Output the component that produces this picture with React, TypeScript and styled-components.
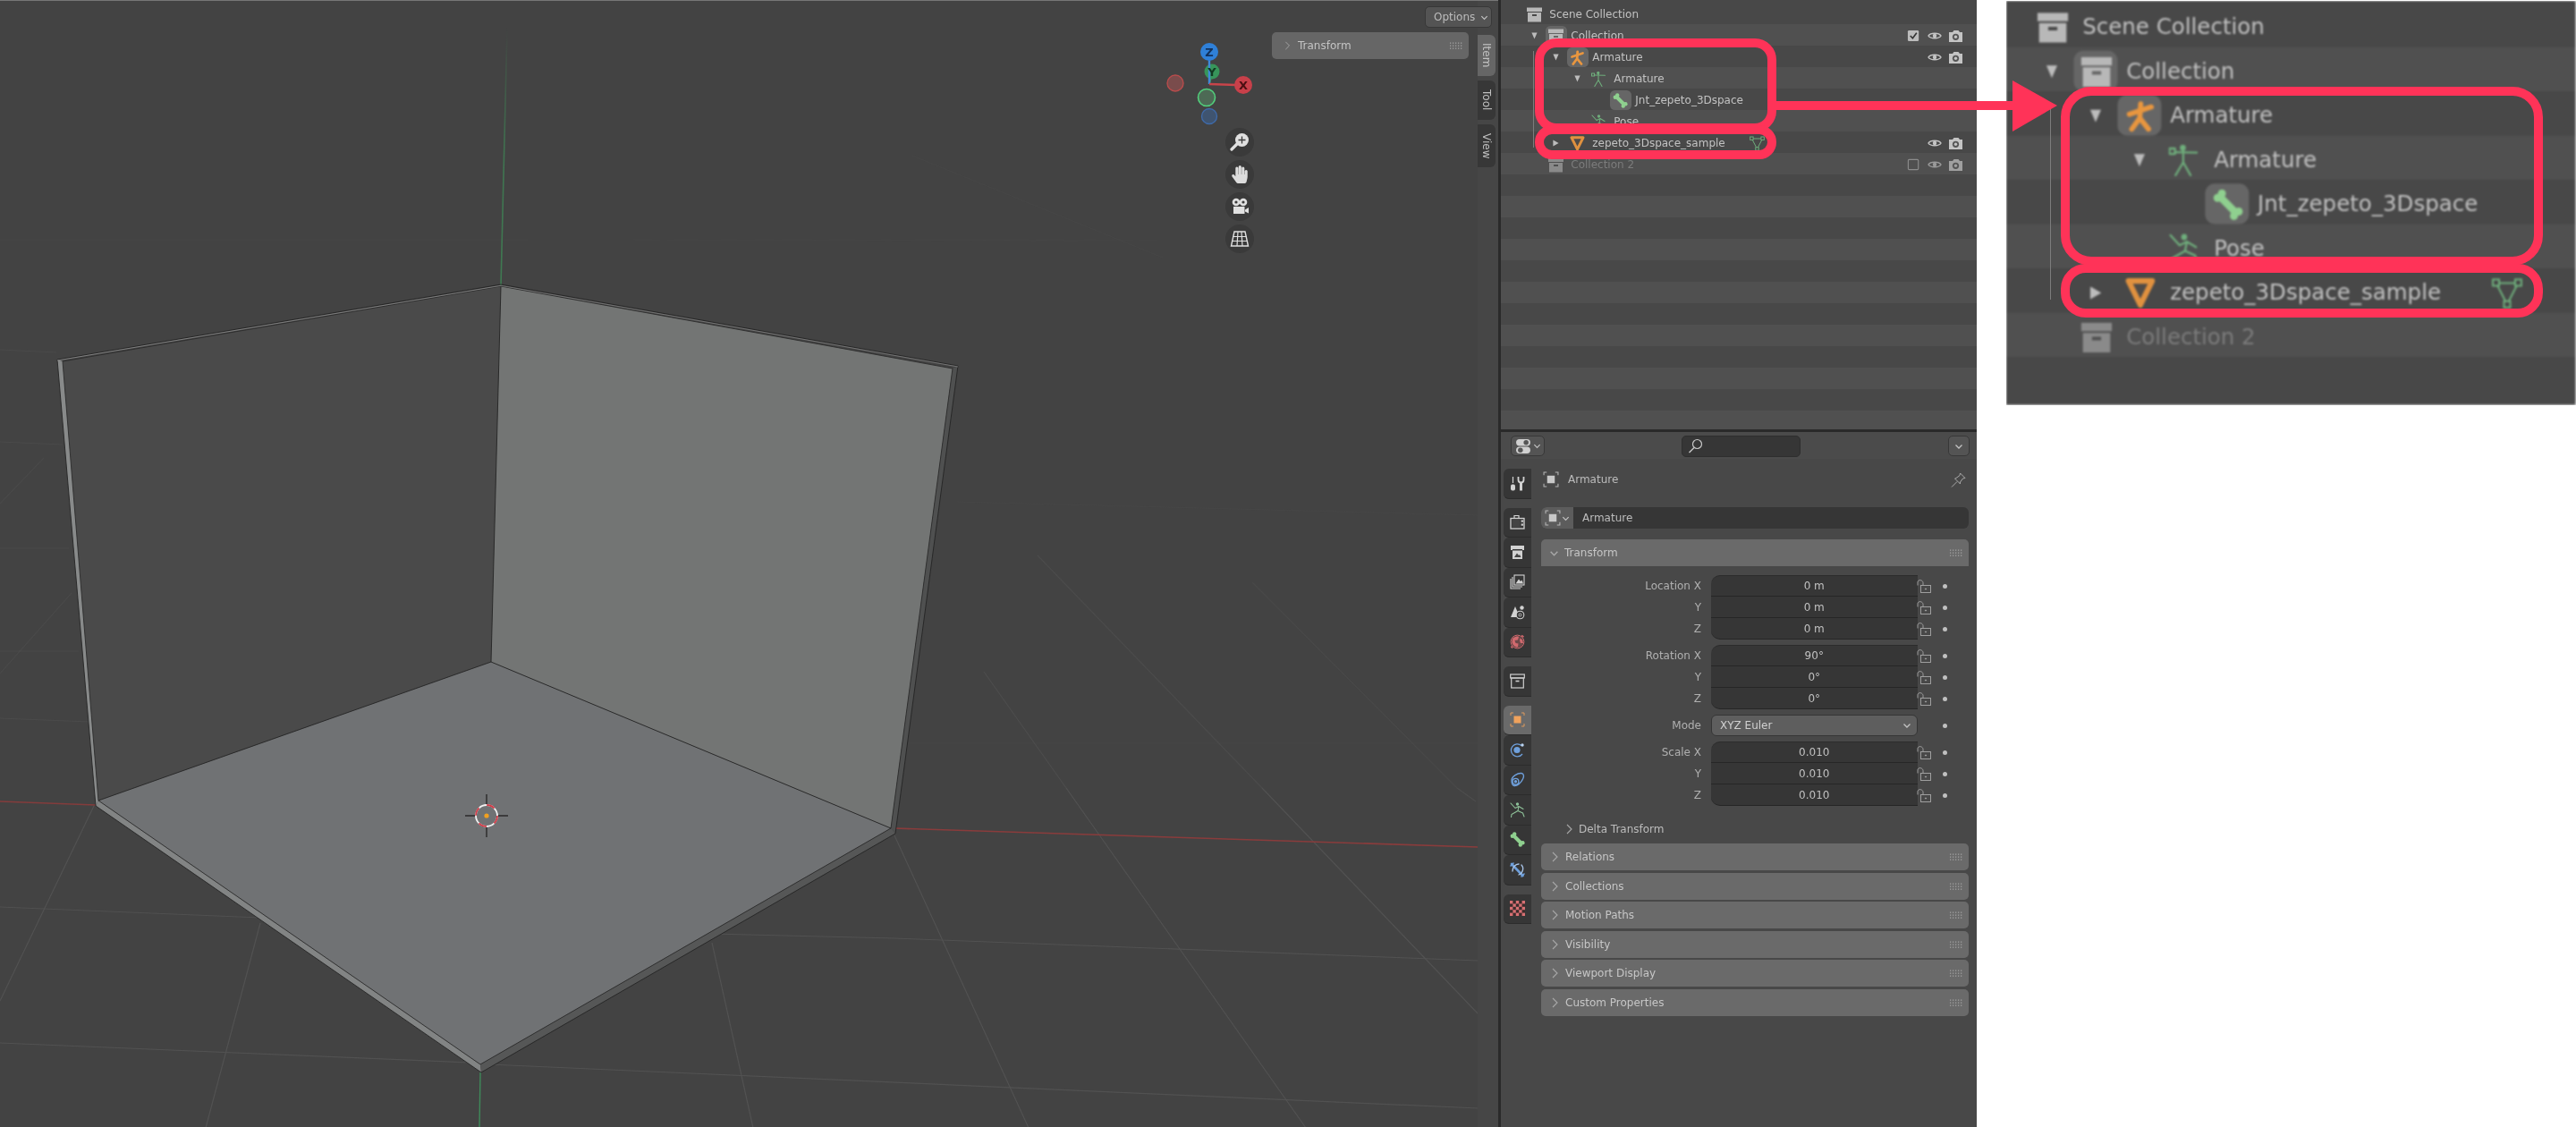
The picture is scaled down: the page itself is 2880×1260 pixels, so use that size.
import React from 'react';
import styled, { createGlobalStyle } from 'styled-components';
import { FaHandPaper } from 'react-icons/fa';

const Global = createGlobalStyle`
  html, body { margin: 0; padding: 0; background: #fff; overflow: hidden; }
  body { font-family: "DejaVu Sans", "Liberation Sans", sans-serif; font-size: 12px; color: #c6c6c6; }
`;

const Page = styled.div`
  position: relative;
  display: flex;
  width: 2880px;
  height: 1260px;
  background: #fff;
  overflow: hidden;
`;

/* ---------- 3D viewport ---------- */
const Viewport = styled.section`
  position: relative;
  display: flex;
  width: 1675px;
  height: 1260px;
  background: #434343;
  border-top: 1px solid #777;
  box-sizing: border-box;
`;
const SceneSvg = styled.svg`
  flex: 0 0 1652px;
  width: 1652px;
  height: 1259px;
  display: block;
`;
const GridGroup = styled.g`
  filter: blur(0.6px);
`;
const TabStrip = styled.div`
  flex: 1;
  background: #464646;
  display: flex;
  flex-direction: column;
  align-items: flex-start;
  gap: 5px;
  padding-top: 38px;
`;
const SideTab = styled.div<{ $active?: boolean; $h: number }>`
  box-sizing: border-box;
  width: 20px;
  height: ${p => p.$h}px;
  writing-mode: vertical-rl;
  display: flex;
  align-items: center;
  justify-content: center;
  font-size: 12px;
  color: #c0c0c0;
  background: ${p => (p.$active ? '#666' : '#373737')};
  border-radius: 0 6px 6px 0;
  filter: blur(0.45px);
`;
const OptionsButton = styled.div`
  position: absolute;
  left: 1593px;
  top: 6px;
  box-sizing: border-box;
  width: 75px;
  height: 24px;
  padding-left: 9px;
  display: flex;
  align-items: center;
  gap: 6px;
  border-radius: 5px;
  background: #545454;
  border: 1px solid #383838;
  color: #bcbcbc;
  filter: blur(0.45px);
`;
const FloatingPanel = styled.div`
  position: absolute;
  left: 1422px;
  top: 35px;
  box-sizing: border-box;
  width: 220px;
  height: 30px;
  padding: 0 7px 0 12px;
  display: flex;
  align-items: center;
  border-radius: 5px;
  background: #666;
  color: #c4c4c4;
  filter: blur(0.45px);
`;
const Gizmo = styled.svg`
  position: absolute;
  left: 1300px;
  top: 34px;
  width: 110px;
  height: 110px;
  filter: blur(0.45px);
`;
const NavColumn = styled.div`
  position: absolute;
  left: 1370px;
  top: 142px;
  display: flex;
  flex-direction: column;
  gap: 4px;
  filter: blur(0.45px);
`;
const NavButton = styled.div`
  width: 32px;
  height: 32px;
  border-radius: 50%;
  background: #3a3a3a;
  display: flex;
  align-items: center;
  justify-content: center;
  color: #dcdcdc;
`;

const Divider = styled.div`
  width: 3px;
  height: 1260px;
  background: #2a2a2a;
`;

/* ---------- right column ---------- */
const Column = styled.div`
  width: 532px;
  height: 1260px;
  display: flex;
  flex-direction: column;
  gap: 3px;
  background: #2a2a2a;
`;
const Tree = styled.div`
  --u: 24px;
  --base: 25.5px;
  --icon: 17px;
  --shift: 2px;
  position: relative;
  box-sizing: border-box;
  overflow: hidden;
  background: #484848;
  padding-top: 3px;
  font-size: 12px;
  filter: blur(0.45px);
`;
const Outliner = styled(Tree)`
  height: 480px;
  flex: none;
`;
const Row = styled.div<{ $odd: boolean; $d: number; $twisty: boolean }>`
  display: flex;
  align-items: center;
  height: var(--u);
  box-sizing: border-box;
  padding-top: var(--shift);
  padding-left: calc(var(--base) + var(--u) * ${p => (p.$twisty ? p.$d - 1 : p.$d)});
  background: ${p => (p.$odd ? '#505050' : '#484848')};
`;
const Twisty = styled.span<{ $open: boolean }>`
  flex: 0 0 var(--u);
  display: flex;
  align-items: center;
  justify-content: center;
  &::before {
    content: '';
    display: block;
    width: calc(var(--u) * 0.26);
    height: calc(var(--u) * 0.3);
    background: #bcbcbc;
    clip-path: ${p =>
      p.$open ? 'polygon(0 0, 100% 0, 50% 100%)' : 'polygon(0 0, 100% 50%, 0 100%)'};
  }
`;
const IconSlot = styled.span<{ $active?: boolean }>`
  flex: 0 0 var(--u);
  height: calc(var(--u) * 0.9);
  display: flex;
  align-items: center;
  justify-content: center;
  border-radius: calc(var(--u) * 0.22);
  background: ${p => (p.$active ? '#666666' : 'transparent')};
`;
const RowLabel = styled.span<{ $dim?: boolean }>`
  margin-left: calc(var(--u) * 0.2);
  white-space: nowrap;
  color: ${p => (p.$dim ? '#7c7c7c' : '#c2c2c2')};
`;
const RowBadge = styled.span`
  margin-left: calc(var(--u) * 1.14);
  display: flex;
`;
const Toggles = styled.div`
  margin-left: auto;
  padding-right: 15px;
  display: grid;
  grid-template-columns: 14px 14px 17px;
  column-gap: 9px;
  align-items: center;
`;
const TreeLine = styled.div<{ $x: number; $y: number; $h: number }>`
  position: absolute;
  left: ${p => p.$x}px;
  top: ${p => p.$y}px;
  height: ${p => p.$h}px;
  width: 1px;
  background: #7c7c7c;
`;
const Highlight = styled.div<{ $x: number; $y: number; $w: number; $h: number; $r: number }>`
  position: absolute;
  left: ${p => p.$x}px;
  top: ${p => p.$y}px;
  width: ${p => p.$w}px;
  height: ${p => p.$h}px;
  box-sizing: border-box;
  border: 10px solid #ff3358;
  border-radius: ${p => p.$r}px;
  z-index: 2;
`;

/* properties */
const Properties = styled.div`
  flex: 1;
  min-height: 0;
  background: #484848;
  display: flex;
  flex-direction: column;
  filter: blur(0.45px);
`;
const PropHeader = styled.header`
  flex: none;
  box-sizing: border-box;
  height: 30px;
  padding: 4px 8.5px 3px 11px;
  display: flex;
  justify-content: space-between;
  align-items: center;
  background: #4b4b4b;
`;
const HeaderButton = styled.div<{ $w: number }>`
  box-sizing: border-box;
  width: ${p => p.$w}px;
  height: 23px;
  display: flex;
  align-items: center;
  justify-content: center;
  gap: 2px;
  border-radius: 5px;
  background: #545454;
  border: 1px solid #383838;
  color: #d0d0d0;
`;
const SearchBox = styled.div`
  box-sizing: border-box;
  width: 133px;
  height: 24px;
  padding-left: 6px;
  margin-right: 12px;
  display: flex;
  align-items: center;
  border-radius: 5px;
  background: #363636;
  border: 1px solid #2e2e2e;
`;
const PropBody = styled.div`
  flex: 1;
  display: flex;
  min-height: 0;
`;
const TabColumn = styled.nav`
  flex: 0 0 45px;
  box-sizing: border-box;
  padding: 11px 0 0 3px;
  display: flex;
  flex-direction: column;
  gap: 10px;
`;
const TabGroup = styled.div`
  display: flex;
  flex-direction: column;
`;
const PropTab = styled.div<{ $active?: boolean }>`
  box-sizing: border-box;
  width: 31px;
  height: 33.5px;
  display: flex;
  align-items: center;
  justify-content: center;
  background: ${p => (p.$active ? '#6a6a6a' : '#363636')};
  border-radius: 6px 0 0 6px;
  border-bottom: 1px solid #2c2c2c;
`;
const PropContent = styled.div`
  flex: 1;
  box-sizing: border-box;
  padding: 10px 9px 0 0;
  display: flex;
  flex-direction: column;
`;
const TitleRow = styled.div`
  height: 26px;
  display: flex;
  align-items: center;
  gap: 10px;
  padding: 0 3px 0 2px;
  margin-bottom: 18px;
`;
const TitleText = styled.span`
  flex: 1;
  color: #bcbcbc;
`;
const NameField = styled.div`
  height: 24px;
  display: flex;
  align-items: center;
  border-radius: 6px;
  background: #363636;
  overflow: hidden;
  margin-bottom: 12px;
  color: #bcbcbc;
`;
const NameButton = styled.div`
  width: 36px;
  height: 100%;
  margin-right: 10px;
  background: #5c5c5c;
  display: flex;
  align-items: center;
  justify-content: center;
  gap: 1px;
  color: #d0d0d0;
`;
const PanelHeader = styled.div<{ $open?: boolean }>`
  flex: none;
  box-sizing: border-box;
  height: 30px;
  padding: 0 7px 0 9px;
  display: flex;
  align-items: center;
  gap: 6px;
  background: #6a6a6a;
  border-radius: ${p => (p.$open ? '5px 5px 0 0' : '5px')};
  color: #c6c6c6;
  margin-bottom: ${p => (p.$open ? '10px' : '2.5px')};
`;
const PanelTitle = styled.span`
  flex: 1;
`;
const FloatingTitle = styled(PanelTitle)`
  margin-left: 7px;
`;
const FieldGroup = styled.div`
  display: flex;
  flex-direction: column;
  margin-bottom: 6px;
`;
const FieldRow = styled.div`
  display: grid;
  grid-template-columns: 179px 230.5px 26px 21px;
  column-gap: 0;
  height: 24px;
  align-items: center;
`;
const FieldLabel = styled.span`
  justify-self: end;
  color: #b0b0b0;
`;
const NumberField = styled.div<{ $first?: boolean; $last?: boolean }>`
  grid-column: 2;
  margin-left: 11px;
  width: 230.5px;
  height: 24px;
  box-sizing: border-box;
  display: flex;
  align-items: center;
  justify-content: center;
  background: #363636;
  color: #c0c0c0;
  border-bottom: 1px solid #262626;
  border-top: ${p => (p.$first ? '1px solid #2c2c2c' : 'none')};
  border-radius: ${p => (p.$first ? '10px' : '0')} 0 0 ${p => (p.$last ? '10px' : '0')};
`;
const SelectField = styled(NumberField)`
  justify-content: space-between;
  padding: 0 6px 0 9px;
  background: #5e5e5e;
  color: #d0d0d0;
  border: 1px solid #353535;
  border-radius: 6px;
`;
const LockSlot = styled.span`
  margin-left: 11px;
  display: flex;
  justify-content: center;
`;
const DotSlot = styled.span`
  margin-left: 11px;
  display: flex;
  justify-content: center;
  &::before {
    content: '';
    width: 5px;
    height: 5px;
    border-radius: 50%;
    background: #c0c0c0;
  }
`;
const SubPanel = styled.div`
  height: 24px;
  margin: 8px 0 4px;
  padding-left: 25px;
  display: flex;
  align-items: center;
  gap: 5px;
  color: #bcbcbc;
`;

/* inset: the same outliner, magnified like the enlarged crop it shows */
const InsetColumn = styled.aside`
  flex: 1;
  padding-left: 33px;
  padding-top: 1px;
`;
const InsetFrame = styled.div`
  position: relative;
  width: 637px;
  height: 452px;
  overflow: hidden;
`;
const InsetTree = styled(Tree)`
  --base: 13px;
  --shift: 3px;
  width: 312.25px;
  height: 219.2px;
  padding-top: 0.75px;
  transform: scale(2.04, 2.0625);
  transform-origin: 0 0;
`;
const ArrowSvg = styled.svg`
  position: absolute;
  left: 1980px;
  top: 80px;
  width: 330px;
  height: 80px;
  z-index: 3;
`;

/* ---------- icons ---------- */
const Svg = styled.svg<{ $size?: number }>`
  width: ${p => (p.$size ? `${p.$size}px` : 'var(--icon)')};
  height: ${p => (p.$size ? `${p.$size}px` : 'var(--icon)')};
  display: block;
  flex: none;
`;

type IconProps = { size?: number; color?: string };
const mk =
  (body: (c: string) => React.ReactNode, def: string) =>
  ({ size, color }: IconProps) =>
    (
      <Svg $size={size} viewBox="0 0 17 17" fill="none">
        {body(color ?? def)}
      </Svg>
    );

const BoxIcon = mk(
  c => (
    <>
      <rect x="0" y="0.5" width="17" height="4.5" fill={c} />
      <path d="M1 6h15v10.5H1z M6 8v2h5V8z" fill={c} fillRule="evenodd" />
    </>
  ),
  '#b8b8b8'
);
const FigureIcon = mk(
  c => (
    <g stroke={c} strokeWidth="2.8" strokeLinecap="round" strokeLinejoin="round">
      <path d="M2.5 7.5L14.5 3.5" />
      <path d="M8.7 1.8L8.2 9.5L3.8 15.5M8.2 9.5L13 15.5" />
    </g>
  ),
  '#e8963f'
);
const ArmatureIcon = mk(
  c => (
    <g stroke={c} strokeWidth="1.1" strokeLinecap="round" strokeLinejoin="round">
      <rect x="0.5" y="2" width="3" height="3" />
      <circle cx="7.8" cy="1.6" r="1.1" fill={c} />
      <path d="M3.5 4L15.5 4.2M8 3L8 9.5L3.8 16.5M8 9.5L12 16.5" />
    </g>
  ),
  '#6fae7c'
);
const BoneIcon = mk(
  c => (
    <g fill={c}>
      <path d="M4 4L13 13" stroke={c} strokeWidth="4" />
      <circle cx="2.8" cy="4.8" r="2.2" />
      <circle cx="5.2" cy="2.4" r="2.2" />
      <circle cx="11.8" cy="14.6" r="2.2" />
      <circle cx="14.4" cy="12.2" r="2.2" />
    </g>
  ),
  '#8fd08f'
);
const PoseIcon = mk(
  c => (
    <g stroke={c} strokeWidth="1.1" strokeLinecap="round" strokeLinejoin="round">
      <circle cx="8.5" cy="2" r="1.1" fill={c} />
      <path d="M1 1L6 6.5L10 4.5L15 7.5M10 4.5L9 9.5L2 13.5L1.5 16.5M9 9.5L14.5 12L16 16" />
    </g>
  ),
  '#6fae7c'
);
const MeshObjIcon = mk(
  c => <path d="M2 1.8H15L8.5 14.8Z" fill={c} fillOpacity="0.05" stroke={c} strokeWidth="3" strokeLinejoin="round" />,
  '#e0913f'
);
const MeshDataIcon = mk(
  c => (
    <g stroke={c} strokeWidth="1">
      <path d="M2.5 3L8.5 14.5L14.5 3Z" />
      <rect x="0.7" y="1" width="3.4" height="3.4" fill="#454545" />
      <rect x="12.9" y="1" width="3.4" height="3.4" fill="#454545" />
      <rect x="6.8" y="12.8" width="3.4" height="3.4" fill="#454545" />
    </g>
  ),
  '#6fae7c'
);
const EyeIcon = mk(
  c => (
    <g>
      <path d="M1 8.5C3.5 4.5 13.5 4.5 16 8.5C13.5 12.5 3.5 12.5 1 8.5Z" stroke={c} strokeWidth="1.5" />
      <circle cx="8.5" cy="8.5" r="2.4" fill={c} />
    </g>
  ),
  '#c4c4c4'
);
const CameraIcon = mk(
  c => (
    <g>
      <path d="M1 4H5L6.5 2H11.5L13 4H16V15H1Z" fill={c} />
      <circle cx="8.5" cy="9.3" r="3.6" fill="#555" />
      <circle cx="8.5" cy="9.3" r="1.7" fill={c} />
    </g>
  ),
  '#c4c4c4'
);
const CheckIcon = mk(
  () => (
    <g>
      <rect x="1" y="2" width="13" height="13" rx="1.5" fill="#bcbcbc" />
      <path d="M4 8.5L6.8 11.5L11.5 5" stroke="#333" strokeWidth="1.7" />
    </g>
  ),
  '#bcbcbc'
);
const UncheckIcon = mk(
  c => <rect x="1.5" y="2.5" width="12" height="12" rx="1.2" stroke={c} strokeWidth="1.2" />,
  '#8c8c8c'
);
const LockIcon = mk(
  c => (
    <g stroke={c} strokeWidth="0.9">
      <path d="M1 7.5V4C1 0.8 6.5 0.8 7 4.5L7 7" />
      <rect x="4.5" y="7.5" width="11" height="8" />
      <circle cx="10" cy="11.5" r="0.6" fill={c} />
    </g>
  ),
  '#a8a8a8'
);
const ObjectIcon = mk(
  c => (
    <g>
      <rect x="4.5" y="4.5" width="8" height="8" fill={c} />
      <path d="M1 4V1H4M13 1H16V4M16 13V16H13M4 16H1V13" stroke={c} strokeWidth="1" opacity="0.85" />
    </g>
  ),
  '#c8c8c8'
);
const ToolIcon = mk(
  c => (
    <g>
      <path d="M3.5 1V8" stroke={c} strokeWidth="1.2" />
      <rect x="1" y="9.5" width="5" height="7" rx="2" fill={c} />
      <path d="M9.5 1V4.5Q9.5 7.5 12.5 7.5Q15.5 7.5 15.5 4.5V1" stroke={c} strokeWidth="1.8" />
      <path d="M12.5 7V16.5" stroke={c} strokeWidth="3" />
    </g>
  ),
  '#d2d2d2'
);
const RenderIcon = mk(
  c => (
    <g>
      <path d="M5 4V1.5H10V4" stroke={c} strokeWidth="1.2" />
      <rect x="1" y="4.5" width="15" height="11.5" stroke={c} strokeWidth="1.3" />
      <rect x="2.5" y="6" width="9" height="8.5" fill="#444" />
      <rect x="12.7" y="6.5" width="2.2" height="2.2" fill={c} />
      <rect x="12.7" y="10.5" width="2.2" height="2.2" fill={c} />
    </g>
  ),
  '#d2d2d2'
);
const OutputIcon = mk(
  c => (
    <g fill={c}>
      <path d="M1 1H16V6H14V5H3V6H1Z" />
      <path d="M3 6.5H14V16H3Z" />
      <path d="M5 14L8 9.5L10 12L11 11L12.5 14Z" fill="#444" />
    </g>
  ),
  '#d2d2d2'
);
const LayerIcon = mk(
  c => (
    <g stroke={c} strokeWidth="1.1">
      <rect x="5" y="1" width="11" height="11" />
      <path d="M3 3V14H14" />
      <path d="M1 5V16H12" />
      <path d="M6.5 10.5L10 5.5L12 8L13.5 6.5L15 10.5Z" fill={c} stroke="none" />
    </g>
  ),
  '#d2d2d2'
);
const SceneIcon = mk(
  c => (
    <g>
      <path d="M6 2L11 14H1Z" fill={c} />
      <circle cx="13.5" cy="3.5" r="2.2" fill={c} />
      <circle cx="11.5" cy="11.5" r="4.3" fill="#363636" stroke={c} strokeWidth="1.1" />
      <circle cx="11.5" cy="11.5" r="1.5" stroke={c} strokeWidth="0.8" />
    </g>
  ),
  '#d2d2d2'
);
const WorldIcon = mk(
  c => (
    <g>
      <circle cx="8.5" cy="8.5" r="6.8" fill={c} opacity="0.35" />
      <path d="M3 5C5 3 8 2 10 3L9 6.5L5.5 7L6.5 10L9.5 10.5L9 14.5C6 15 3 12 2.5 9Z" fill={c} />
      <path d="M11.5 4.5L14 6.5L15 10L12 10L11 7Z" fill={c} />
      <path d="M1.5 13.5L3 15.5M13 1.5L15.5 3" stroke={c} strokeWidth="1.6" />
      <circle cx="8.5" cy="8.5" r="7.4" stroke={c} strokeWidth="1" />
    </g>
  ),
  '#d0696e'
);
const BoxOutlineIcon = mk(
  c => (
    <g stroke={c} strokeWidth="1.2">
      <rect x="0.7" y="1" width="15.6" height="4" />
      <rect x="1.7" y="5" width="13.6" height="11" />
      <path d="M6.5 8.5H10.5" strokeWidth="1.6" />
    </g>
  ),
  '#cfcfcf'
);
const PhysicsIcon = mk(
  c => (
    <g>
      <path d="M13 3.5A7 7 0 1 0 14 13" stroke={c} strokeWidth="1.3" />
      <circle cx="8" cy="8.5" r="3.6" fill={c} />
      <circle cx="14" cy="3" r="1.7" fill="#bcd4f0" />
    </g>
  ),
  '#6fa0dc'
);
const ConstraintIcon = mk(
  c => (
    <g stroke={c} strokeWidth="1.4">
      <path d="M2 9.5C2 5 9 1 13 1.5C16 2 16 5.5 14.5 8C12.5 12.5 8 16 5 15.5C3 15 2 12 2 9.5Z" />
      <circle cx="6.5" cy="10.8" r="3.4" />
      <circle cx="6.5" cy="10.8" r="1" fill={c} />
    </g>
  ),
  '#6fa0dc'
);
const BoneConstraintIcon = mk(
  c => (
    <g stroke={c} strokeWidth="1.6" strokeLinecap="round">
      <path d="M2 2L14.5 15" strokeWidth="2.6" />
      <path d="M1 4L4 1M13 16L16 13" />
      <path d="M13 3C16 6 15 12 10 14M10 2C6 2 3 6 3 10" stroke="#a8c4e8" strokeWidth="1.3" />
    </g>
  ),
  '#6fa0dc'
);
const TextureIcon = () => (
  <Svg $size={17} viewBox="0 0 17 17">
    <rect width="17" height="17" fill="#d66f72" />
    {[0, 1, 2, 3, 4].flatMap(r =>
      [0, 1, 2, 3, 4]
        .filter(c => (r + c) % 2 === 1)
        .map(c => <rect key={`${r}-${c}`} x={c * 3.4} y={r * 3.4} width="3.4" height="3.4" fill="#3a2c2c" />)
    )}
  </Svg>
);
const ChevronDown = ({ size = 10, color = '#c4c4c4' }: IconProps) => (
  <Svg $size={size} viewBox="0 0 10 10" fill="none">
    <path d="M1.5 3.5L5 7L8.5 3.5" stroke={color} strokeWidth="1.3" />
  </Svg>
);
const ChevronRight = ({ size = 12, color = '#a8a8a8' }: IconProps) => (
  <Svg $size={size} viewBox="0 0 12 12" fill="none">
    <path d="M4 1L9 6L4 11" stroke={color} strokeWidth="1.1" />
  </Svg>
);
const Grip = () => (
  <Svg $size={14} viewBox="0 0 14 8">
    {[0, 1, 2].flatMap(r =>
      [0, 1, 2, 3, 4].map(c => (
        <rect key={`${r}${c}`} x={c * 3} y={r * 3 + 0.5} width="1.3" height="1.3" fill="#a0a0a0" />
      ))
    )}
  </Svg>
);
const SearchIcon = () => (
  <Svg $size={17} viewBox="0 0 17 17" fill="none">
    <circle cx="10.5" cy="6.5" r="5" stroke="#c8c8c8" strokeWidth="1.2" />
    <path d="M7 10.5L1.5 16" stroke="#c8c8c8" strokeWidth="1.5" />
  </Svg>
);
const EditorIcon = () => (
  <Svg $size={18} viewBox="0 0 17 17">
    <rect x="1" y="1" width="15" height="7" rx="3.5" fill="#d0d0d0" />
    <rect x="1" y="9" width="15" height="7" rx="3.5" fill="#d0d0d0" />
    <circle cx="11.5" cy="4.5" r="2.6" fill="#555" />
    <circle cx="5.5" cy="12.5" r="2.6" fill="#555" />
  </Svg>
);
const PinIcon = () => (
  <Svg $size={17} viewBox="0 0 17 17" fill="none">
    <path d="M10.5 1L16 6.5L13.5 7L10.5 11L10.5 13L4.5 7L6 6.5L10 3.5Z" stroke="#a8a8a8" strokeWidth="1" />
    <path d="M7 10.5L1 16.5" stroke="#a8a8a8" strokeWidth="1" />
  </Svg>
);

/* ---------- data ---------- */
type TreeRow = {
  d: number;
  open?: boolean;
  icon: React.ComponentType<IconProps>;
  active?: boolean;
  label: string;
  dim?: boolean;
  badge?: boolean;
  toggles?: 'check' | 'uncheck' | 'plain';
};

const treeRows: TreeRow[] = [
  { d: 0, icon: BoxIcon, label: 'Scene Collection' },
  { d: 1, open: true, icon: BoxIcon, active: true, label: 'Collection', toggles: 'check' },
  { d: 2, open: true, icon: FigureIcon, active: true, label: 'Armature', toggles: 'plain' },
  { d: 3, open: true, icon: ArmatureIcon, label: 'Armature' },
  { d: 4, icon: BoneIcon, active: true, label: 'Jnt_zepeto_3Dspace' },
  { d: 3, icon: PoseIcon, label: 'Pose' },
  { d: 2, open: false, icon: MeshObjIcon, label: 'zepeto_3Dspace_sample', badge: true, toggles: 'plain' },
  { d: 1, icon: BoxIcon, label: 'Collection 2', dim: true, toggles: 'uncheck' },
];

const TreeRows = ({ total, toggles }: { total: number; toggles: boolean }) => (
  <>
    {Array.from({ length: total }, (_, i) => {
      const r = treeRows[i];
      if (!r) return <Row key={i} $odd={i % 2 === 1} $d={0} $twisty={false} />;
      const hasTwisty = r.open !== undefined;
      const Ico = r.icon;
      const iconColor = r.dim && r.icon === BoxIcon ? '#8a8a8a' : undefined;
      return (
        <Row key={i} $odd={i % 2 === 1} $d={r.d} $twisty={hasTwisty}>
          {hasTwisty && <Twisty $open={!!r.open} />}
          <IconSlot $active={r.active}>
            <Ico color={iconColor} />
          </IconSlot>
          <RowLabel $dim={r.dim}>{r.label}</RowLabel>
          {r.badge && (
            <RowBadge>
              <MeshDataIcon />
            </RowBadge>
          )}
          {toggles && r.toggles && (
            <Toggles>
              {r.toggles === 'check' ? <CheckIcon size={16} /> : r.toggles === 'uncheck' ? <UncheckIcon size={16} /> : <span />}
              <EyeIcon size={16} color={r.dim ? '#9a9a9a' : undefined} />
              <CameraIcon size={17} color={r.dim ? '#a0a0a0' : undefined} />
            </Toggles>
          )}
        </Row>
      );
    })}
  </>
);

const tabGroups: { icon: React.ComponentType<IconProps>; color?: string; active?: boolean }[][] = [
  [{ icon: ToolIcon }],
  [{ icon: RenderIcon }, { icon: OutputIcon }, { icon: LayerIcon }, { icon: SceneIcon }, { icon: WorldIcon }],
  [{ icon: BoxOutlineIcon }],
  [
    { icon: ObjectIcon, color: '#f0a25c', active: true },
    { icon: PhysicsIcon },
    { icon: ConstraintIcon },
    { icon: PoseIcon, color: '#8fc39a' },
    { icon: BoneIcon },
    { icon: BoneConstraintIcon },
  ],
  [{ icon: TextureIcon as React.ComponentType<IconProps> }],
];

const Vector = ({ label, values }: { label: string; values: string[] }) => (
  <FieldGroup>
    {values.map((v, i) => (
      <FieldRow key={i}>
        <FieldLabel>{i === 0 ? `${label} X` : i === 1 ? 'Y' : 'Z'}</FieldLabel>
        <NumberField $first={i === 0} $last={i === values.length - 1}>
          {v}
        </NumberField>
        <LockSlot>
          <LockIcon size={17} />
        </LockSlot>
        <DotSlot />
      </FieldRow>
    ))}
  </FieldGroup>
);

const collapsed = ['Relations', 'Collections', 'Motion Paths', 'Visibility', 'Viewport Display', 'Custom Properties'];

/* ---------- viewport drawing data ---------- */
const gridLines: [number, number, number, number, number][] = [
  [1000, 1048, 1652, 1073, 0.9],
  [796, 1043, 1000, 1048, 0.9],
  [547, 1189, 1652, 1238, 0.9],
  [0, 1013, 291, 1025, 0.8],
  [0, 1165, 526, 1187, 0.9],
  [1000, 933, 1150, 1260, 0.9],
  [1192, 880, 1460, 1260, 0.9],
  [1100, 750, 1192, 880, 0.6],
  [1411, 880, 1652, 1132, 0.9],
  [1160, 620, 1411, 880, 0.5],
  [1629, 880, 1650, 895, 0.6],
  [1400, 650, 1629, 880, 0.35],
  [105, 900, 0, 1118, 0.9],
  [291, 1031, 230, 1260, 0.9],
  [796, 1053, 842, 1260, 0.9],
  [0, 390, 63, 393, 0.45],
  [0, 493, 70, 496, 0.45],
  [0, 612, 77, 612, 0.45],
  [0, 727, 88, 727, 0.45],
  [0, 802, 100, 806, 0.5],
  [0, 562, 49, 511, 0.35],
  [0, 752, 80, 662, 0.35],
  [1007, 830, 1652, 830, 0.3],
  [1070, 560, 1652, 575, 0.18],
  [0, 267, 590, 267, 0.22],
  [1020, 173, 1300, 287, 0.18],
  [700, 267, 1300, 268, 0.18],
];

const P = {
  backTop: [560, 319],
  ltO: [64, 401],
  ltI: [70, 403],
  rtO: [1071, 408],
  rtI: [1065, 411],
  back: [549, 739],
  lbI: [110, 894],
  lbO: [107, 900],
  rbI: [996, 925],
  rbO: [1001, 931],
  bI: [537, 1189],
  bO: [538, 1198],
};
const poly = (...pts: number[][]) => pts.map(p => p.join(',')).join(' ');

export default function App() {
  return (
    <Page>
      <Global />
      <Viewport>
        <SceneSvg viewBox="0 0 1652 1259">
          <defs>
            <linearGradient id="gfade" x1="0" y1="0" x2="0" y2="1">
              <stop offset="0" stopColor="#3f7a52" stopOpacity="0" />
              <stop offset="0.5" stopColor="#3f7a52" stopOpacity="0.9" />
              <stop offset="1" stopColor="#3f7a52" />
            </linearGradient>
          </defs>
          <GridGroup>
            {gridLines.map(([x1, y1, x2, y2, o], i) => (
              <line key={i} x1={x1} y1={y1} x2={x2} y2={y2} stroke="#545454" strokeWidth="1.2" opacity={o} />
            ))}
          </GridGroup>
          <line x1="0" y1="895" x2="107" y2="899" stroke="#843c3c" strokeWidth="1.4" />
          <line x1="1000" y1="925" x2="1652" y2="946" stroke="#8a3c3c" strokeWidth="1.6" />
          <polygon points="566.2,30 567.8,30 560.8,318 559.2,318" fill="url(#gfade)" />
          <line x1="537" y1="1198" x2="536" y2="1259" stroke="#3f8a5a" strokeWidth="1.4" />

          <polygon points={poly(P.backTop, P.ltI, P.lbI, P.back)} fill="#4a4a4a" />
          <polygon points={poly(P.backTop, P.rtI, P.rbI, P.back)} fill="#737574" />
          <polygon points={poly(P.back, P.lbI, P.bI, P.rbI)} fill="#707274" />
          <polygon points={poly(P.ltO, P.ltI, P.lbI, P.lbO)} fill="#888a8a" />
          <polygon points={poly(P.rtI, P.rtO, P.rbO, P.rbI)} fill="#4f5050" />
          <polygon points={poly(P.lbI, P.bI, P.bO, P.lbO)} fill="#828484" />
          <polygon points={poly(P.bI, P.rbI, P.rbO, P.bO)} fill="#565757" />
          <g stroke="#252525" strokeWidth="0.9" fill="none">
            <polyline points={poly(P.lbO, P.ltO, [560, 317], P.rtO, P.rbO, P.bO, P.lbO)} />
            <polyline points={poly(P.ltI, P.backTop, P.rtI, P.rbI)} stroke="#2c2c2c" />
            <polyline points={poly(P.ltI, P.lbI, P.bI, P.rbI)} stroke="#2c2c2c" />
            <line x1={P.backTop[0]} y1={P.backTop[1]} x2={P.back[0]} y2={P.back[1]} />
            <line x1={P.back[0]} y1={P.back[1]} x2={P.lbI[0]} y2={P.lbI[1]} />
            <line x1={P.back[0]} y1={P.back[1]} x2={P.rbI[0]} y2={P.rbI[1]} />
          </g>
          <line x1="64" y1="402" x2="560" y2="318.3" stroke="#9a9a9a" strokeWidth="0.7" />
          <line x1="560" y1="318.3" x2="1071" y2="409" stroke="#8a8a8a" strokeWidth="0.7" />

          <g>
            <path d="M520 911H532M556 911H568M544 887V899M544 923V935" stroke="#2a2a2a" strokeWidth="1.4" />
            <circle cx="544" cy="911" r="12" fill="none" stroke="#f0f0f0" strokeWidth="1.8" />
            <circle cx="544" cy="911" r="12" fill="none" stroke="#d03c48" strokeWidth="1.8" strokeDasharray="9.4 9.4" />
            <circle cx="544" cy="911" r="2.6" fill="#f0a020" />
          </g>
        </SceneSvg>
        <TabStrip>
          <SideTab $active $h={46}>Item</SideTab>
          <SideTab $h={44}>Tool</SideTab>
          <SideTab $h={48}>View</SideTab>
        </TabStrip>

        <OptionsButton>
          Options <ChevronDown size={9} />
        </OptionsButton>
        <FloatingPanel>
          <ChevronRight size={10} />
          <FloatingTitle>Transform</FloatingTitle>
          <Grip />
        </FloatingPanel>

        <Gizmo viewBox="1300 34 110 110">
          <circle cx="1314" cy="92" r="9" fill="#7a4c4c" stroke="#b84c4c" strokeWidth="1.4" />
          <circle cx="1352" cy="129" r="8.5" fill="#3f5470" stroke="#3f6aa8" strokeWidth="1.4" />
          <circle cx="1349" cy="108" r="9.5" fill="#4d6a55" stroke="#52d07c" strokeWidth="1.6" />
          <line x1="1352" y1="93" x2="1355" y2="80" stroke="#3d9a5a" strokeWidth="2" />
          <circle cx="1355" cy="79" r="8.5" fill="#37955a" />
          <line x1="1352" y1="93" x2="1352" y2="60" stroke="#3f8ad8" strokeWidth="2.4" />
          <line x1="1352" y1="93" x2="1382" y2="94" stroke="#c8444a" strokeWidth="2.4" />
          <circle cx="1352" cy="57" r="10" fill="#2f80d8" />
          <circle cx="1390" cy="94" r="10" fill="#c8404a" />
          <text x="1352" y="62" textAnchor="middle" fontSize="13" fontWeight="700" fill="#12305a" fontFamily="'DejaVu Sans', sans-serif">Z</text>
          <text x="1355" y="84" textAnchor="middle" fontSize="13" fontWeight="700" fill="#123a22" fontFamily="'DejaVu Sans', sans-serif">Y</text>
          <text x="1390" y="99" textAnchor="middle" fontSize="13" fontWeight="700" fill="#4a0f12" fontFamily="'DejaVu Sans', sans-serif">X</text>
        </Gizmo>

        <NavColumn>
          <NavButton>
            <Svg $size={22} viewBox="0 0 22 22">
              <circle cx="13.5" cy="8.5" r="7.5" fill="#e0e0e0" />
              <path d="M13.5 4.5V12.5M9.5 8.5H17.5" stroke="#3a3a3a" strokeWidth="1.3" />
              <path d="M8 13L2 19" stroke="#e0e0e0" strokeWidth="3.2" strokeLinecap="round" />
            </Svg>
          </NavButton>
          <NavButton>
            <FaHandPaper size={20} />
          </NavButton>
          <NavButton>
            <Svg $size={22} viewBox="0 0 22 22">
              <circle cx="7" cy="6" r="4.3" fill="#e0e0e0" />
              <circle cx="15" cy="6" r="4.3" fill="#e0e0e0" />
              <circle cx="7" cy="6" r="1.6" fill="#3a3a3a" />
              <circle cx="15" cy="6" r="1.6" fill="#3a3a3a" />
              <rect x="4" y="11" width="12.5" height="8" fill="#e0e0e0" />
              <path d="M17 14.5L21 12V18.5L17 16.5Z" fill="#e0e0e0" />
            </Svg>
          </NavButton>
          <NavButton>
            <Svg $size={22} viewBox="0 0 22 22" fill="none">
              <path d="M5 3H17L20.5 19H1.5Z" stroke="#e0e0e0" strokeWidth="1.4" />
              <path d="M3.5 8.5H18.5M2.5 13.5H19.5M9 3L8 19M13 3L14 19" stroke="#e0e0e0" strokeWidth="1.2" />
            </Svg>
          </NavButton>
        </NavColumn>
      </Viewport>
      <Divider />
      <Column>
        <Outliner>
          <TreeRows total={20} toggles />
          <TreeLine $x={36} $y={57} $h={108} />
          <Highlight $x={38} $y={43} $w={270} $h={105} $r={24} />
          <Highlight $x={38} $y={140} $w={270} $h={38} $r={19} />
        </Outliner>
        <Properties>
          <PropHeader>
            <HeaderButton $w={38}>
              <EditorIcon />
              <ChevronDown size={9} />
            </HeaderButton>
            <SearchBox>
              <SearchIcon />
            </SearchBox>
            <HeaderButton $w={24}>
              <ChevronDown size={10} />
            </HeaderButton>
          </PropHeader>
          <PropBody>
            <TabColumn>
              {tabGroups.map((g, i) => (
                <TabGroup key={i}>
                  {g.map((t, j) => {
                    const Ico = t.icon;
                    return (
                      <PropTab key={j} $active={t.active}>
                        <Ico size={17} color={t.color} />
                      </PropTab>
                    );
                  })}
                </TabGroup>
              ))}
            </TabColumn>
            <PropContent>
              <TitleRow>
                <ObjectIcon size={18} />
                <TitleText>Armature</TitleText>
                <PinIcon />
              </TitleRow>
              <NameField>
                <NameButton>
                  <ObjectIcon size={18} />
                  <ChevronDown size={9} />
                </NameButton>
                Armature
              </NameField>
              <PanelHeader $open>
                <ChevronDown size={11} color="#a8a8a8" />
                <PanelTitle>Transform</PanelTitle>
                <Grip />
              </PanelHeader>
              <Vector label="Location" values={['0 m', '0 m', '0 m']} />
              <Vector label="Rotation" values={['90°', '0°', '0°']} />
              <FieldGroup>
                <FieldRow>
                  <FieldLabel>Mode</FieldLabel>
                  <SelectField>
                    XYZ Euler <ChevronDown size={10} />
                  </SelectField>
                  <span />
                  <DotSlot />
                </FieldRow>
              </FieldGroup>
              <Vector label="Scale" values={['0.010', '0.010', '0.010']} />
              <SubPanel>
                <ChevronRight size={12} />
                Delta Transform
              </SubPanel>
              {collapsed.map(name => (
                <PanelHeader key={name}>
                  <ChevronRight size={12} />
                  <PanelTitle>{name}</PanelTitle>
                  <Grip />
                </PanelHeader>
              ))}
            </PropContent>
          </PropBody>
        </Properties>
      </Column>
      <InsetColumn>
        <InsetFrame>
          <InsetTree>
            <TreeRows total={9} toggles={false} />
          </InsetTree>
          <TreeLine $x={49} $y={114} $h={220} />
          <Highlight $x={61} $y={96} $w={539} $h={200} $r={34} />
          <Highlight $x={61} $y={294} $w={539} $h={60} $r={28} />
        </InsetFrame>
      </InsetColumn>
      <ArrowSvg viewBox="1980 80 330 80">
        <rect x="1980" y="113" width="272" height="10" fill="#ff3358" />
        <polygon points="2250,90 2300,118 2250,147" fill="#ff3358" />
      </ArrowSvg>
    </Page>
  );
}
